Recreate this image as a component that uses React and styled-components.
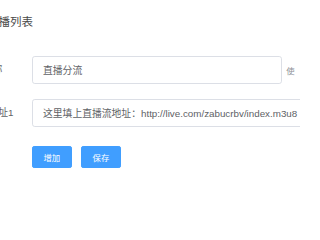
import React from "react";
import styled, {createGlobalStyle} from "styled-components";

const GlobalStyle = createGlobalStyle`
  html, body {
    margin: 0;
    padding: 0;
    background: #fff;
    overflow: hidden;
    font-family: "Liberation Sans", "Noto Sans CJK SC", sans-serif;
  }
`;

export default function App() {
  return (
    <>
      <GlobalStyle />
      <Page>
        <Title>直播列表</Title>
        <Form>
          <Row>
            <Label>直播名称</Label>
            <Field>
              <Input defaultValue="直播分流" width={250} />
              <Help>使</Help>
            </Field>
          </Row>
          <Row>
            <Label shift={-4}>直播流地址1</Label>
            <Field>
              <Input
                defaultValue="这里填上直播流地址：http://live.com/zabucrbv/index.m3u8"
                width={360}
              />
            </Field>
          </Row>
          <Row>
            <Label />
            <Field>
              <Button>增加</Button>
              <Button>保存</Button>
            </Field>
          </Row>
        </Form>
      </Page>
    </>
  );
}

const Page = styled.div`
  width: 300px;
  height: 200px;
  overflow: hidden;
  padding-top: 14px;
  box-sizing: border-box;
`;

const Title = styled.div`
  margin-left: -13px;
  font-size: 11.5px;
  line-height: 16px;
  color: #4a4a4a;
`;

const Form = styled.div`
  margin-top: 26px;
  margin-left: -37px;
  display: flex;
  flex-direction: column;
  gap: 15.4px;
`;

const Row = styled.div`
  display: flex;
  align-items: center;
  height: 28px;
`;

const Label = styled.div`
  width: 69px;
  flex-shrink: 0;
  white-space: nowrap;
  overflow: hidden;
  text-indent: ${props => props.shift || 0}px;
  font-size: 9.8px;
  line-height: 28px;
  color: #606266;
`;

const Field = styled.div`
  display: flex;
  align-items: center;
  gap: 9.3px;
`;

const Input = styled.input`
  box-sizing: border-box;
  flex-shrink: 0;
  width: ${props => props.width}px;
  height: 28px;
  padding: 0 10px;
  border: 1px solid #dcdfe6;
  border-radius: 2.8px;
  outline: none;
  font-family: "Liberation Sans", "Noto Sans CJK SC", sans-serif;
  font-size: 9.8px;
  color: #606266;
  background: #fff;
`;

const Help = styled.span`
  margin-left: -5px;
  font-size: 8.4px;
  color: #909399;
  white-space: nowrap;
`;

const Button = styled.button`
  box-sizing: border-box;
  height: 21.5px;
  padding: 0 10.5px;
  border: 0.7px solid #409eff;
  border-radius: 2.1px;
  background: #409eff;
  color: #fff;
  font-family: "Liberation Sans", "Noto Sans CJK SC", sans-serif;
  font-size: 8.4px;
  cursor: pointer;
`;
